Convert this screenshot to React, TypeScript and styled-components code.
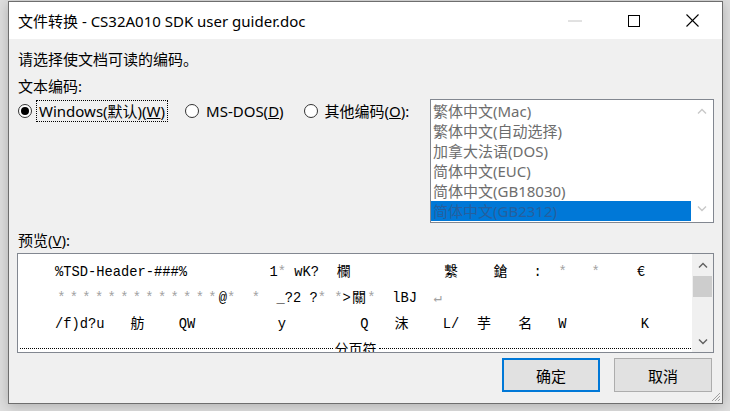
import React from 'react'
import styled, { createGlobalStyle } from 'styled-components'

const GlobalStyle = createGlobalStyle`
    * { box-sizing: border-box; }
    html, body { margin: 0; padding: 0; }
    body {
        width: 730px;
        height: 411px;
        overflow: hidden;
        background: #dedede;
        font-family: 'Noto Sans', 'Noto Sans CJK SC', sans-serif;
        color: #000;
    }
`

type Seg = string | { wide: string } | { dim: string } | { stars: number }

const previewLines: Seg[][] = [
    [
        '%TSD-Header-###%          1',
        { dim: '*' },
        ' wK?  ',
        { wide: '欄' },
        '           ',
        { wide: '繫' },
        '    ',
        { wide: '鎗' },
        '   :  ',
        { dim: '*' },
        '   ',
        { dim: '*' },
        '    ',
        { wide: '€' },
    ],
    [
        { stars: 13 },
        '@',
        { dim: '*' },
        '  ',
        { dim: '*' },
        '  _?2 ?',
        { dim: '*' },
        ' ',
        { dim: '*' },
        '>',
        { wide: '關' },
        { dim: '*' },
        '  lBJ  ',
        { dim: '↵' },
    ],
    [
        '/f)d?u   ',
        { wide: '舫' },
        '    QW          y         Q   ',
        { wide: '沫' },
        '    L/  ',
        { wide: '芋' },
        '   ',
        { wide: '名' },
        '   W         K',
    ],
]

const encodings = [
    '繁体中文(Mac)',
    '繁体中文(自动选择)',
    '加拿大法语(DOS)',
    '简体中文(EUC)',
    '简体中文(GB18030)',
    '简体中文(GB2312)',
]

const Chevron = ({ up, color }: { up?: boolean; color: string }) => (
    <svg width='10' height='6' viewBox='0 0 10 6'>
        <polyline
            points={up ? '1,5.5 5,1.5 9,5.5' : '1,0.5 5,4.5 9,0.5'}
            fill='none'
            stroke={color}
            strokeWidth='1.4'
        />
    </svg>
)

const renderSeg = (seg: Seg, i: number) => {
    if (typeof seg === 'string') return <React.Fragment key={i}>{seg}</React.Fragment>
    if ('wide' in seg) return <Wide key={i}>{seg.wide}</Wide>
    if ('dim' in seg) return <Dim key={i}>{seg.dim}</Dim>
    return (
        <React.Fragment key={i}>
            {Array.from({ length: seg.stars }).map((_, j) => (
                <Star key={j}>*</Star>
            ))}
        </React.Fragment>
    )
}

const App = () => {
    const [encoding, setEncoding] = React.useState('windows')
    return (
        <>
            <GlobalStyle />
            <Window>
                <TitleBar>
                    <Title>文件转换 - CS32A010 SDK user guider.doc</Title>
                    <CaptionButton>
                        <svg width='14' height='2'>
                            <line x1='0' y1='1' x2='14' y2='1' stroke='#c4c4c4' strokeWidth='1' />
                        </svg>
                    </CaptionButton>
                    <CaptionButton>
                        <svg width='12' height='12'>
                            <rect x='0.5' y='0.5' width='11' height='11' fill='none' stroke='#000' strokeWidth='1' />
                        </svg>
                    </CaptionButton>
                    <CaptionButton>
                        <svg width='13' height='13'>
                            <line x1='0.5' y1='0.5' x2='12.5' y2='12.5' stroke='#000' strokeWidth='1.1' />
                            <line x1='12.5' y1='0.5' x2='0.5' y2='12.5' stroke='#000' strokeWidth='1.1' />
                        </svg>
                    </CaptionButton>
                </TitleBar>
                <Body>
                    <Label $top={10}>请选择使文档可读的编码。</Label>
                    <Label $top={7}>文本编码:</Label>
                    <EncodingRow>
                        <RadioGroup>
                            <RadioItem onClick={() => setEncoding('windows')}>
                                <RadioCircle $checked={encoding === 'windows'} />
                                <RadioText $focused={encoding === 'windows'}>
                                    Windows(默认)(<u>W</u>)
                                </RadioText>
                            </RadioItem>
                            <RadioItem onClick={() => setEncoding('msdos')}>
                                <RadioCircle $checked={encoding === 'msdos'} />
                                <RadioText $focused={encoding === 'msdos'}>
                                    MS-DOS(<u>D</u>)
                                </RadioText>
                            </RadioItem>
                            <RadioItem onClick={() => setEncoding('other')}>
                                <RadioCircle $checked={encoding === 'other'} />
                                <RadioText $focused={encoding === 'other'}>
                                    其他编码(<u>O</u>):
                                </RadioText>
                            </RadioItem>
                        </RadioGroup>
                        <ListBox>
                            <ListItems>
                                {encodings.map((e, i) => (
                                    <ListItem key={e} $selected={i === encodings.length - 1}>
                                        {e}
                                    </ListItem>
                                ))}
                            </ListItems>
                            <ListScroll>
                                <Chevron up color='#c8c8c8' />
                                <Chevron color='#c8c8c8' />
                            </ListScroll>
                        </ListBox>
                    </EncodingRow>
                    <Label $top={7}>
                        预览(<u>V</u>):
                    </Label>
                    <PreviewBox>
                        <PreviewText>
                            {previewLines.map((line, i) => (
                                <PreviewLine key={i}>{line.map(renderSeg)}</PreviewLine>
                            ))}
                            <PageBreak>
                                <Dots />
                                <PageBreakText>分页符</PageBreakText>
                                <Dots />
                            </PageBreak>
                        </PreviewText>
                        <PreviewScroll>
                            <ScrollArrow>
                                <Chevron up color='#606060' />
                            </ScrollArrow>
                            <ScrollThumb />
                            <ScrollArrow>
                                <Chevron color='#606060' />
                            </ScrollArrow>
                        </PreviewScroll>
                    </PreviewBox>
                    <ButtonRow>
                        <DialogButton $primary>确定</DialogButton>
                        <DialogButton>取消</DialogButton>
                    </ButtonRow>
                </Body>
                <Grip>
                    <svg width='11' height='11' viewBox='0 0 11 11'>
                        <line x1='10' y1='2' x2='2' y2='10' stroke='#a0a0a0' strokeWidth='1' />
                        <line x1='10' y1='5' x2='5' y2='10' stroke='#a0a0a0' strokeWidth='1' />
                        <line x1='10' y1='8' x2='8' y2='10' stroke='#a0a0a0' strokeWidth='1' />
                    </svg>
                </Grip>
            </Window>
        </>
    )
}

const Window = styled.div`
    position: relative;
    margin: 1px 0 0 8px;
    width: 715px;
    height: 403px;
    border: 1px solid #6e6e6e;
    background: #f0f0f0;
    box-shadow: 0 2px 12px rgba(0, 0, 0, 0.22);
    display: flex;
    flex-direction: column;
`
const TitleBar = styled.div`
    height: 37px;
    background: #fff;
    display: flex;
    align-items: center;
`
const Title = styled.div`
    flex: 1;
    padding-left: 9px;
    font-size: 15px;
    line-height: 20px;
    white-space: nowrap;
`
const CaptionButton = styled.div`
    width: 59px;
    height: 37px;
    display: flex;
    align-items: center;
    justify-content: center;
`
const Body = styled.div`
    flex: 1;
    display: flex;
    flex-direction: column;
    padding: 0 8px;
`
const Label = styled.div<{ $top: number }>`
    margin-top: ${(props) => props.$top}px;
    padding-left: 1px;
    height: 20px;
    font-size: 15px;
    line-height: 20px;
    white-space: nowrap;
`
const EncodingRow = styled.div`
    margin-top: 3px;
    display: flex;
    justify-content: space-between;
    align-items: flex-start;
`
const RadioGroup = styled.div`
    margin-top: 1px;
    padding-left: 1px;
    display: flex;
    gap: 17px;
`
const RadioItem = styled.label`
    display: flex;
    align-items: center;
    gap: 4px;
    cursor: default;
`
const RadioCircle = styled.span<{ $checked?: boolean }>`
    width: 14px;
    height: 14px;
    border-radius: 50%;
    border: 1px solid #333;
    background: #fff;
    display: flex;
    align-items: center;
    justify-content: center;
    &::after {
        content: '';
        width: 8px;
        height: 8px;
        border-radius: 50%;
        background: ${(props) => (props.$checked ? '#000' : 'transparent')};
    }
`
const RadioText = styled.span<{ $focused?: boolean }>`
    padding: 1px 2px;
    border: 1px dotted ${(props) => (props.$focused ? '#000' : 'transparent')};
    font-size: 15px;
    line-height: 18px;
    white-space: nowrap;
`
const ListBox = styled.div`
    width: 284px;
    height: 124px;
    border: 1px solid #828790;
    background: #fff;
    display: flex;
`
const ListItems = styled.div`
    flex: 1;
    padding-top: 1px;
    overflow: hidden;
`
const ListItem = styled.div<{ $selected?: boolean }>`
    height: 20px;
    padding-left: 2px;
    font-size: 15px;
    line-height: 20px;
    white-space: nowrap;
    color: ${(props) => (props.$selected ? '#255f9e' : '#6d6d6d')};
    background: ${(props) => (props.$selected ? '#0078d7' : 'transparent')};
`
const ListScroll = styled.div`
    width: 22px;
    display: flex;
    flex-direction: column;
    align-items: center;
    justify-content: space-between;
    padding: 8px 0 10px;
`
const PreviewBox = styled.div`
    margin-top: 3px;
    height: 100px;
    border: 1px solid #828790;
    background: #fff;
    display: flex;
`
const PreviewText = styled.div`
    flex: 1;
    overflow: hidden;
    padding: 3px 0 0 37px;
    font-family: 'Liberation Mono', monospace;
    font-size: 13.75px;
    line-height: 26px;
    white-space: pre;
`
const PreviewLine = styled.div`
    height: 26px;
`
const Wide = styled.span`
    display: inline-block;
    width: 16.5px;
    text-align: center;
    font-family: 'Noto Sans CJK SC', sans-serif;
    font-size: 14px;
`
const Dim = styled.span`
    color: #a2a2a2;
`
const Star = styled.span`
    display: inline-block;
    width: 12.6px;
    text-align: center;
    color: #a2a2a2;
`
const PageBreak = styled.div`
    height: 26px;
    margin: 0 1px 0 -35px;
    display: flex;
    align-items: center;
`
const Dots = styled.div`
    flex: 1;
    border-top: 1px dotted #000;
`
const PageBreakText = styled.span`
    padding: 0 2px;
    font-family: 'Noto Sans CJK SC', sans-serif;
    font-size: 14px;
`
const PreviewScroll = styled.div`
    width: 21px;
    background: #f0f0f0;
    display: flex;
    flex-direction: column;
`
const ScrollArrow = styled.div`
    height: 21px;
    display: flex;
    align-items: center;
    justify-content: center;
    &:last-child {
        margin-top: auto;
    }
`
const ScrollThumb = styled.div`
    margin: 1px 1px 0;
    height: 21px;
    background: #cdcdcd;
`
const ButtonRow = styled.div`
    margin-top: 5px;
    padding-right: 2px;
    display: flex;
    justify-content: flex-end;
    gap: 14px;
`
const DialogButton = styled.button<{ $primary?: boolean }>`
    width: 98px;
    height: 34px;
    background: #e1e1e1;
    border: ${(props) => (props.$primary ? '2px solid #0078d7' : '1px solid #adadad')};
    font-family: 'Noto Sans', 'Noto Sans CJK SC', sans-serif;
    font-size: 15px;
    color: #000;
    padding: 0;
`
const Grip = styled.div`
    position: absolute;
    right: 1px;
    bottom: 1px;
    width: 11px;
    height: 11px;
    display: flex;
`

export default App
